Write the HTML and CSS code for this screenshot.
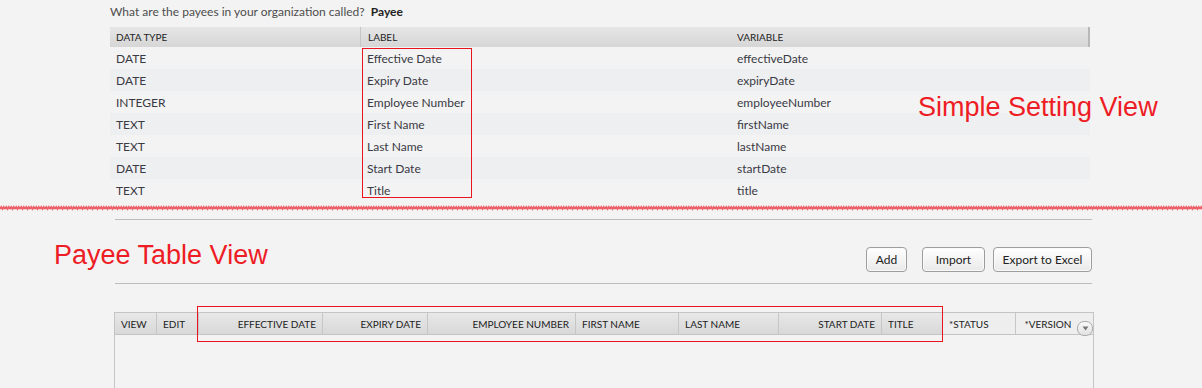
FILE: index.html
```html
<!DOCTYPE html>
<html lang="en">
<head>
    <meta charset="UTF-8">
    <title>Payee Settings</title>
    <link rel="stylesheet" href="styles.css">
</head>
<body>
    <!-- Simple setting view -->
    <div class="settings">
        <p class="question">What are the payees in your organization called? <strong>Payee</strong></p>
        <div class="fields">
            <div class="fields-head">
                <div class="c1">DATA TYPE</div>
                <div class="c2">LABEL</div>
                <div class="c3">VARIABLE</div>
            </div>
            <div class="row"><div class="c1">DATE</div><div class="c2">Effective Date</div><div class="c3">effectiveDate</div></div>
            <div class="row alt"><div class="c1">DATE</div><div class="c2">Expiry Date</div><div class="c3">expiryDate</div></div>
            <div class="row"><div class="c1">INTEGER</div><div class="c2">Employee Number</div><div class="c3">employeeNumber</div></div>
            <div class="row alt"><div class="c1">TEXT</div><div class="c2">First Name</div><div class="c3">firstName</div></div>
            <div class="row"><div class="c1">TEXT</div><div class="c2">Last Name</div><div class="c3">lastName</div></div>
            <div class="row alt"><div class="c1">DATE</div><div class="c2">Start Date</div><div class="c3">startDate</div></div>
            <div class="row"><div class="c1">TEXT</div><div class="c2">Title</div><div class="c3">title</div></div>
            <div class="mark mark-label"></div>
            <div class="note note-simple">Simple Setting View</div>
        </div>
    </div>

    <svg class="wave" width="1202" height="6" xmlns="http://www.w3.org/2000/svg">
        <defs>
            <pattern id="zig" width="5" height="6" patternUnits="userSpaceOnUse">
                <path d="M0 4 L1.25 2 L2.5 4 L3.75 2 L5 4" fill="none" stroke="#ea2a36" stroke-width="1.8" opacity="0.75"/>
            </pattern>
        </defs>
        <rect width="1202" height="6" fill="url(#zig)"/>
    </svg>

    <!-- Payee table view -->
    <div class="payees">
        <div class="divider"></div>
        <div class="toolbar">
            <div class="note note-table">Payee Table View</div>
            <button class="btn btn-add">Add</button>
            <button class="btn btn-import">Import</button>
            <button class="btn btn-export">Export to Excel</button>
        </div>
        <div class="divider"></div>

        <div class="grid">
            <div class="grid-head">
                <div class="h w-view">VIEW</div>
                <div class="h w-edit">EDIT</div>
                <div class="h right w-eff">EFFECTIVE DATE</div>
                <div class="h right w-exp">EXPIRY DATE</div>
                <div class="h right w-emp">EMPLOYEE NUMBER</div>
                <div class="h w-first">FIRST NAME</div>
                <div class="h w-last">LAST NAME</div>
                <div class="h right w-start">START DATE</div>
                <div class="h w-title">TITLE</div>
                <div class="h plain w-status">*STATUS</div>
                <div class="h plain right w-ver">*VERSION <span class="menu-btn"><svg width="7" height="5" viewBox="0 0 7 5"><path d="M0.5 0.5 H6.5 L3.5 4.5 Z" fill="#777"/></svg></span></div>
            </div>
            <div class="mark mark-cols"></div>
        </div>
    </div>
</body>
</html>
```

FILE: styles.css
```css
body {
    margin: 0;
    background: #f3f3f3;
    font-family: Lato, "Open Sans", sans-serif;
    color: #3a3a44;
    height: 388px;
    overflow: hidden;
}

/* top part */
.settings {
    padding-left: 110px;
    width: 980px;
}
.question {
    margin: 0;
    height: 27px;
    line-height: 24px;
    font-size: 12px;
    color: #4d4d4d;
}
.question strong {
    color: #222;
    font-weight: 700;
    margin-left: 3px;
}
.fields {
    position: relative;
}
.fields-head {
    display: flex;
    height: 20px;
    line-height: 21px;
    font-size: 10px;
    color: #222;
    background: linear-gradient(#e6e6e6, #d6d6d6);
    border-right: 2px solid #b8b8b8;
    box-sizing: border-box;
}
.fields-head .c2 {
    border-left: 1px solid #c6c6c6;
}
.row {
    display: flex;
    height: 22px;
    line-height: 23px;
    font-size: 12px;
}
.row.alt {
    background: #eeeff1;
}
.c1 { width: 250px; padding-left: 6px; box-sizing: border-box; }
.c2 { width: 370px; padding-left: 7px; box-sizing: border-box; }
.c3 { flex: 1; padding-left: 7px; }

/* annotations */
.mark {
    position: absolute;
    border: 1.5px solid #e8141e;
}
.mark-label {
    left: 252px;
    top: 21px;
    width: 108px;
    height: 148px;
}
.note {
    color: #ee1c25;
    font-family: "Liberation Sans", Arial, sans-serif;
    font-size: 27px;
}
.note-simple {
    position: absolute;
    left: 808px;
    top: 65px;
    white-space: nowrap;
}

.wave {
    display: block;
    margin-top: 4px;
}

/* bottom part */
.payees {
    padding-top: 8px;
}
.divider {
    margin-left: 115px;
    width: 977px;
    height: 1px;
    background: #b9bdbf;
}
.toolbar {
    display: flex;
    align-items: center;
    justify-content: flex-end;
    width: 1092px;
    height: 63px;
    position: relative;
}
.note-table {
    position: absolute;
    left: 54px;
    top: 20px;
}
.btn {
    height: 25px;
    margin-top: 16px;
    padding: 0;
    font-family: inherit;
    font-size: 12px;
    color: #222;
    background: linear-gradient(#ffffff, #e9e9e9);
    border: 1px solid #9d9d9d;
    border-radius: 4px;
    box-shadow: inset 0 0 0 1px #fafafa;
}
.btn-add { width: 41px; }
.btn-import { width: 63px; margin-left: 15px; }
.btn-export { width: 99px; margin-left: 8px; }

.grid {
    position: relative;
    margin: 28px 0 0 114px;
    width: 980px;
    height: 80px;
    border: 1px solid #c4c4c4;
    border-bottom: 0;
    box-sizing: border-box;
}
.grid-head {
    display: flex;
    height: 21px;
    border-bottom: 1px solid #c4c4c4;
    font-size: 10px;
    color: #222;
}
.h {
    height: 21px;
    line-height: 23px;
    padding: 0 6px;
    box-sizing: border-box;
    border-right: 1px solid #c6c6c6;
    background: linear-gradient(#e8e8e8, #d8d8d8);
    white-space: nowrap;
}
.h.right { text-align: right; }
.h.plain { background: #eeeeee; }
.w-view { width: 42px; }
.w-edit { width: 42px; }
.w-eff { width: 124px; }
.w-exp { width: 105px; }
.w-emp { width: 148px; }
.w-first { width: 103px; }
.w-last { width: 100px; }
.w-start { width: 103px; }
.w-title { width: 61px; }
.w-status { width: 73px; }
.w-ver { flex: 1; border-right: 0; padding-right: 0; }
.menu-btn {
    display: inline-block;
    width: 14px;
    height: 13px;
    margin-left: 3px;
    vertical-align: -3px;
    border: 1px solid #aaa;
    border-radius: 7px;
    background: linear-gradient(#fafafa, #e2e2e2);
    text-align: center;
    line-height: 11px;
}
.mark-cols {
    left: 82px;
    top: -7px;
    width: 744px;
    height: 34px;
}
```
